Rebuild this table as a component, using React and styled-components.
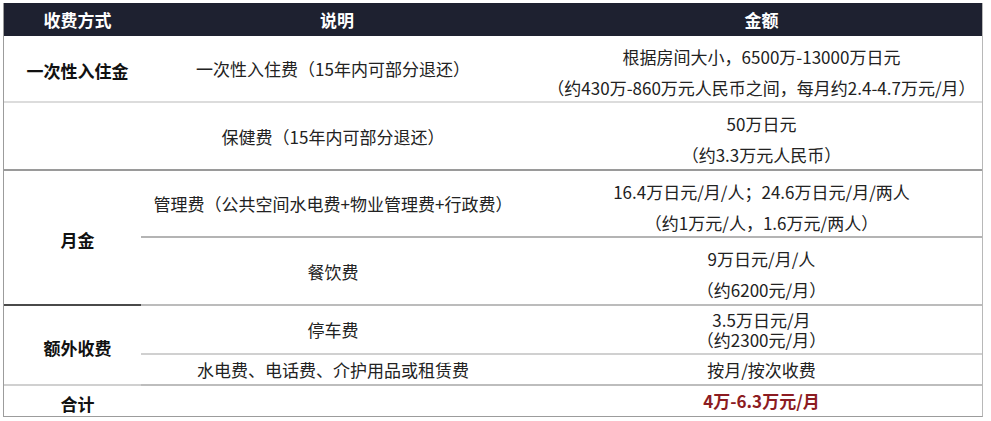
import React from 'react'
import styled, { createGlobalStyle } from 'styled-components';

const rows = [
  { label: '一次性入住金', labelSpan: 1, desc: '一次性入住费（15年内可部分退还）', amount: ['根据房间大小，6500万-13000万日元', '（约430万-860万元人民币之间，每月约2.4-4.7万元/月）'], line: '#dcdcdc' },
  { label: '', labelSpan: 1, desc: '保健费（15年内可部分退还）', amount: ['50万日元', '（约3.3万元人民币）'], line: '#9a9a9a', labelLine: '#9a9a9a' },
  { label: '月金', labelSpan: 2, desc: '管理费（公共空间水电费+物业管理费+行政费）', amount: ['16.4万日元/月/人；24.6万日元/月/两人', '（约1万元/人，1.6万元/两人）'], line: '#b4b4b4', labelLine: '#4a4a4a' },
  { desc: '餐饮费', amount: ['9万日元/月/人', '（约6200元/月）'], line: '#bcbcbc' },
  { label: '额外收费', labelSpan: 2, desc: '停车费', amount: ['3.5万日元/月', '（约2300元/月）'], line: '#d0d0d0', tight: true },
  { desc: '水电费、电话费、介护用品或租赁费', amount: ['按月/按次收费'], line: '#bdbdbd' },
  { label: '合计', labelSpan: 1, desc: '', amount: ['4万-6.3万元/月'], line: 'transparent', total: true },
];

function App() {
  return (
    <Page>
      <GlobalStyle />
      <Sheet>
        <HeadCell>收费方式</HeadCell>
        <HeadCell $shift="-8px">说明</HeadCell>
        <HeadCell $shift="8px">金额</HeadCell>
        {rows.map((r, i) => (
          <React.Fragment key={i}>
            {r.labelSpan && (
              <LabelCell $span={r.labelSpan} $line={r.labelLine || r.line} $low={r.total}>
                {r.label}
              </LabelCell>
            )}
            <DescCell $line={r.line}>{r.desc}</DescCell>
            <AmountCell
              $line={r.line}
              $tight={r.tight}
              $total={r.total}
              $offset={r.amount.length > 1 && !r.tight}
            >
              {r.amount.map((a, j) => (
                <span key={j}>{a}</span>
              ))}
            </AmountCell>
          </React.Fragment>
        ))}
      </Sheet>
    </Page>
  )
}

export default App

const GlobalStyle = createGlobalStyle`
  body {
    margin: 0;
    background: #ffffff;
    font-family: "Noto Sans CJK SC", "Noto Sans", sans-serif;
  }
`;

const Page = styled.div`
  padding: 3px 0 0 3px;
  width: 980px;
`;

const Sheet = styled.div`
  display: grid;
  grid-template-columns: 137px 392px 1fr;
  grid-template-rows: 33px 67px 68px 67px 68px 49px 31px 30px;
  width: 980px;
  box-sizing: border-box;
  border-left: 1px solid #9c9c9c;
  border-right: 1px solid #b8b8b8;
  border-bottom: 1px solid #9c9c9c;
  color: #222222;
  font-size: 17px;
`;

const HeadCell = styled.div`
  background: #1e2130;
  color: #ffffff;
  font-weight: 700;
  display: flex;
  align-items: center;
  justify-content: center;
  padding-left: ${p => p.$shift || '0'};
  &:first-child {
    padding-left: 10px;
  }
`;

const LabelCell = styled.div`
  grid-column: 1;
  grid-row: span ${p => p.$span};
  display: flex;
  align-items: center;
  justify-content: center;
  padding-left: 10px;
  padding-top: ${p => (p.$low ? '6px' : '4px')};
  font-weight: 700;
  color: #111111;
  box-sizing: border-box;
  border-bottom: 2px solid ${p => p.$line};
`;

const DescCell = styled.div`
  grid-column: 2;
  display: flex;
  align-items: center;
  justify-content: center;
  padding-right: 8px;
  box-sizing: border-box;
  border-bottom: 2px solid ${p => p.$line};
`;

const AmountCell = styled.div`
  grid-column: 3;
  display: flex;
  flex-direction: column;
  align-items: center;
  justify-content: center;
  padding-left: 8px;
  padding-top: ${p => (p.$offset ? '6px' : '0')};
  line-height: ${p => (p.$tight ? '20px' : '31px')};
  box-sizing: border-box;
  border-bottom: 2px solid ${p => p.$line};
  color: ${p => (p.$total ? '#8c1c22' : 'inherit')};
  font-weight: ${p => (p.$total ? 700 : 400)};
`;
